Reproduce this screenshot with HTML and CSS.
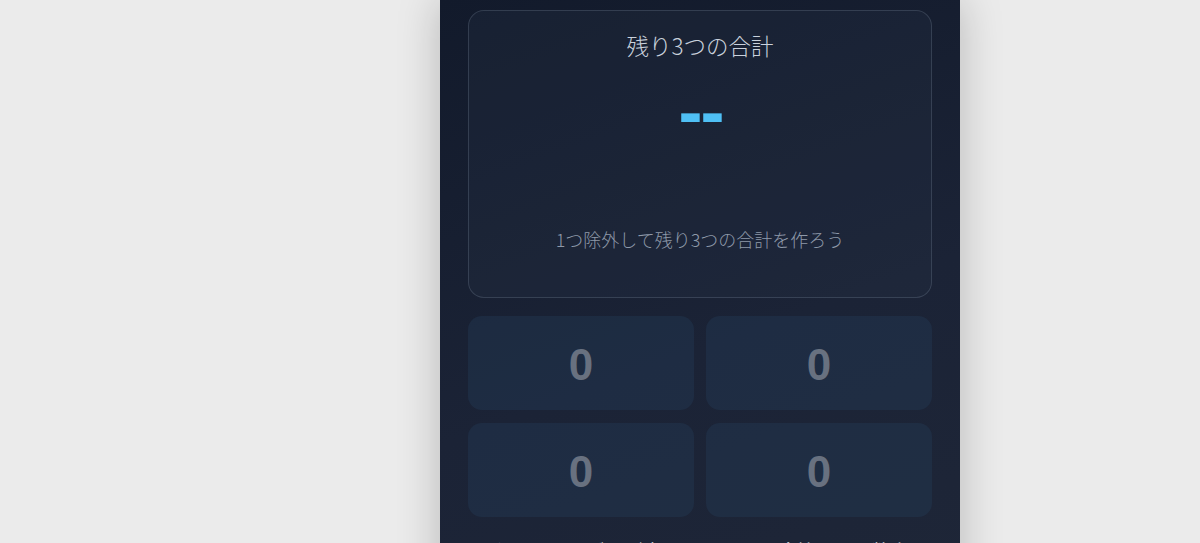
FILE: index.html
```html
<!DOCTYPE html>
<html lang="ja">
<head>
    <meta charset="UTF-8">
    <title>残り3つの合計</title>
    <link rel="stylesheet" href="styles.css">
</head>
<body>
    <div class="app">
        <!-- 合計表示 -->
        <div class="sum-card">
            <div class="sum-title">残り3つの合計</div>
            <div class="sum-value">--</div>
            <div class="sum-hint">1つ除外して残り3つの合計を作ろう</div>
        </div>

        <div class="num-grid">
            <button class="num-btn">0</button>
            <button class="num-btn">0</button>
            <button class="num-btn">0</button>
            <button class="num-btn">0</button>
        </div>

        <p class="guide">スタートでパズルが表示されたら、除外したい数字をタップしてください。</p>
    </div>
</body>
</html>
```

FILE: styles.css
```css
html, body {
    margin: 0;
    height: 100%;
    overflow: hidden;
}
body {
    font-family: "Noto Sans CJK JP", "Noto Sans", sans-serif;
    background-color: #ebebeb;
    display: flex;
    justify-content: center;
    padding-left: 200px;
}
.app {
    width: 520px;
    min-height: 700px;
    box-sizing: border-box;
    padding: 10px 28px 40px;
    background: linear-gradient(160deg, #121a2b 0%, #1b2336 50%, #1f2738 100%);
    box-shadow: 0 0 40px rgba(0,0,0,0.22);
}
.sum-card {
    height: 288px;
    box-sizing: border-box;
    border: 1px solid rgba(148,163,184,0.22);
    border-radius: 16px;
    background: rgba(40,50,70,0.25);
    display: flex;
    flex-direction: column;
    align-items: center;
    padding-top: 18px;
}
.sum-title {
    color: #c9d1dc;
    font-size: 22.5px;
    font-weight: 300;
    line-height: 32px;
}
.sum-value {
    margin-top: 18px;
    color: #4fc0f5;
    font-family: "DejaVu Sans", sans-serif;
    font-weight: bold;
    font-size: 60px;
    line-height: 70px;
    letter-spacing: -3px;
}
.sum-hint {
    margin-top: 77px;
    color: #8e99a9;
    font-size: 18px;
    font-weight: 300;
    line-height: 26px;
}
.num-grid {
    margin-top: 18px;
    display: grid;
    grid-template-columns: 1fr 1fr;
    gap: 13px 12px;
}
.num-btn {
    height: 94px;
    border: none;
    border-radius: 14px;
    background-color: rgba(37,62,92,0.35);
    color: #687180;
    font-family: "Liberation Sans", Arial, sans-serif;
    font-weight: bold;
    font-size: 44px;
    padding-top: 4px;
    cursor: pointer;
}
.guide {
    margin: 19px 4px 0;
    color: #e6ebf2;
    font-size: 19px;
    line-height: 30px;
}
```
